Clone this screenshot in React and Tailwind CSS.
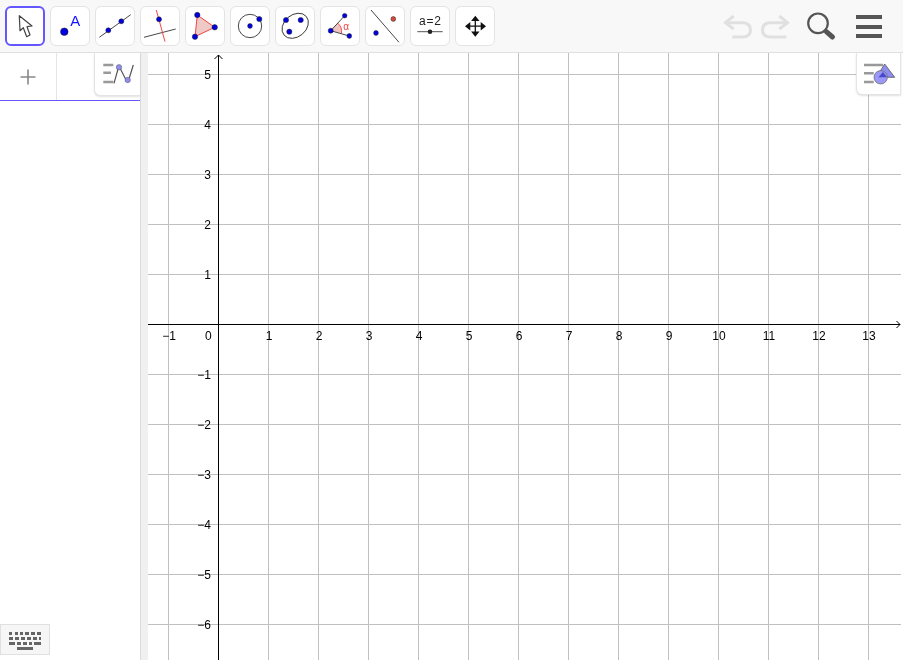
const F = "'Liberation Sans', Arial, sans-serif";

function ToolBtn({ active, children }) {
  return (
    <div className={`w-10 h-10 shrink-0 rounded-[6px] bg-white ${active ? "border-2 border-[#6557ff]" : "border border-[#e4e4e4]"} flex items-center justify-center`}>
      <svg width="40" height="40" viewBox="0 0 40 40" className={`shrink-0 will-change-transform ${active ? "-m-[2px]" : "-m-px"}`}>{children}</svg>
    </div>
  );
}

const B = "#0000e0";
const Dot = ({ x, y, r = 2.7, c = B }) => <circle cx={x} cy={y} r={r} fill={c} stroke="#222" strokeWidth="0.5" />;

function Toolbar() {
  return (
    <div className="h-[53px] shrink-0 bg-[#f8f8f8] border-b border-[#e0e0e0] flex items-start pl-[5px] pt-[6px] relative">
      <div className="flex gap-[5px]">
        <ToolBtn active>
          <path d="M14.3 9.7 L15 24.7 L18.3 21.7 L21.7 30.7 L25 29 L22 20.7 L27 20 Z" fill="#fff" stroke="#444" strokeWidth="1.2" strokeLinejoin="round" />
        </ToolBtn>
        <ToolBtn>
          <circle cx="14.3" cy="25.7" r="3.8" fill={B} stroke="#222" strokeWidth="0.5" />
          <text x="20.3" y="19.5" fontSize="15" fill="#1414ff" fontFamily={F}>A</text>
        </ToolBtn>
        <ToolBtn>
          <line x1="4.3" y1="31.3" x2="35.7" y2="8.7" stroke="#333" strokeWidth="0.9" />
          <Dot x={13.3} y={24.3} r={2.5} />
          <Dot x={26.3} y={15.3} r={2.5} />
        </ToolBtn>
        <ToolBtn>
          <line x1="4" y1="31.3" x2="35.7" y2="23" stroke="#333" strokeWidth="0.9" />
          <line x1="16.3" y1="4" x2="25" y2="35.7" stroke="#e33" strokeWidth="0.9" />
          <Dot x={19} y={13.3} r={2.5} />
        </ToolBtn>
        <ToolBtn>
          <path d="M12.3 9 L29.7 21.3 L10 30.7 Z" fill="#efc9c5" stroke="#e44" strokeWidth="1" />
          <Dot x={12.3} y={9} />
          <Dot x={29.7} y={21.3} />
          <Dot x={10} y={30.7} />
        </ToolBtn>
        <ToolBtn>
          <circle cx="20" cy="20" r="11.7" fill="none" stroke="#333" strokeWidth="0.9" />
          <Dot x={20} y={20} r={2.4} />
          <Dot x={29.3} y={13} r={2.6} />
        </ToolBtn>
        <ToolBtn>
          <ellipse cx="20.2" cy="19.8" rx="14.5" ry="11" fill="none" stroke="#333" strokeWidth="0.9" transform="rotate(-40 20.2 19.8)" />
          <Dot x={11} y={14} r={2.6} />
          <Dot x={25.7} y={14} r={2.6} />
          <Dot x={14.3} y={25.7} r={2.6} />
        </ToolBtn>
        <ToolBtn>
          <path d="M10.7 24.7 L17.5 17 A11 11 0 0 1 21.5 27.3 Z" fill="#f0c4c0" stroke="none" />
          <path d="M17.5 17 A11 11 0 0 1 21.5 27.3" fill="none" stroke="#e44" strokeWidth="0.9" />
          <line x1="10.7" y1="24.7" x2="24.7" y2="9.7" stroke="#333" strokeWidth="0.9" />
          <line x1="10.7" y1="24.7" x2="29.3" y2="30" stroke="#333" strokeWidth="0.9" />
          <Dot x={10.7} y={24.7} r={2.5} />
          <Dot x={24.7} y={9.7} r={2.3} />
          <Dot x={29.3} y={30} r={2.4} />
          <text x="23.2" y="23.5" fontSize="10" fill="#e44" fontFamily={F}>α</text>
        </ToolBtn>
        <ToolBtn>
          <line x1="6" y1="4" x2="34" y2="36.3" stroke="#333" strokeWidth="0.9" />
          <Dot x={28.3} y={13} r={2.4} c="#d84a3a" />
          <Dot x={11} y={27} r={2.4} />
        </ToolBtn>
        <ToolBtn>
          <text x="9" y="19" fontSize="12" fill="#222" fontFamily={F} textLength="22" lengthAdjust="spacing">a=2</text>
          <line x1="7.3" y1="25.7" x2="32.7" y2="25.7" stroke="#555" strokeWidth="1" />
          <circle cx="20" cy="25.7" r="2.3" fill="#222" />
        </ToolBtn>
        <ToolBtn>
          <path d="M20.3 13 V28 M13 20.2 H28" stroke="#111" strokeWidth="1.3" />
          <path d="M20.3 9.7 L24.5 15 H16.1 Z M20.3 30.7 L24.5 25.4 H16.1 Z M10 20.2 L15.3 16 V24.4 Z M31 20.2 L25.7 16 V24.4 Z" fill="#111" />
        </ToolBtn>
      </div>
      <div className="absolute left-[722px] top-[14px] flex items-center gap-[6px]">
        <svg width="32" height="26" viewBox="0 0 32 26" fill="none" stroke="#e0e0e0" strokeWidth="3">
          <path d="M4 8.7 H20 Q28.5 8.7 28.5 16 Q28.5 23 20 23 H10.3" />
          <path d="M11.7 2 L3.5 8.7 L11.7 15" />
        </svg>
        <svg width="32" height="26" viewBox="0 0 32 26" fill="none" stroke="#e0e0e0" strokeWidth="3">
          <path d="M28 8.7 H11 Q2.5 8.7 2.5 16 Q2.5 23 11 23 H26.3" />
          <path d="M19.3 2 L27.5 8.7 L19.3 15" />
        </svg>
      </div>
      <svg width="32" height="32" viewBox="0 0 32 32" className="absolute left-[806px] top-[11px]" fill="none">
        <circle cx="12" cy="12.3" r="9.8" stroke="#555" strokeWidth="2.2" />
        <line x1="20.3" y1="20.7" x2="26.5" y2="26" stroke="#555" strokeWidth="5" strokeLinecap="round" />
      </svg>
      <div className="absolute left-[856px] top-[15px] w-[26px] flex flex-col gap-[5.5px]">
        <div className="h-1 bg-[#555]" />
        <div className="h-1 bg-[#555]" />
        <div className="h-1 bg-[#555]" />
      </div>
    </div>
  );
}

function AlgebraPanel() {
  return (
    <div className="w-[141px] shrink-0 border-r border-[#dcdcdc] relative bg-white">
      <div className="h-[48px] border-b border-[#6557ff] flex">
        <div className="w-[57px] border-r border-[#e4e4e4] flex items-center justify-center">
          <svg width="16" height="16" viewBox="0 0 16 16"><path d="M8 .5 V15.5 M.5 8 H15.5" stroke="#888" strokeWidth="1.6" /></svg>
        </div>
      </div>
      <div className="absolute right-0 top-0 w-[46px] h-[43px] bg-white border-l border-b border-[#e4e4e4] rounded-bl-[6px] shadow-[0_1px_2px_rgba(0,0,0,0.12)]">
        <svg width="45" height="42" viewBox="0 0 45 42" fill="none">
          <path d="M8.3 12 H18.3 M8.3 19.7 H16 M8.3 29 H18.3" stroke="#999" strokeWidth="2.4" />
          <path d="M19 30.3 L23 16 Q24 13.5 25.5 16 L31 27 Q32.7 29 34 26 L38.3 12" stroke="#555" strokeWidth="1.2" />
          <circle cx="24" cy="14.3" r="2.7" fill="#8f8df0" stroke="#555" strokeWidth="0.5" />
          <circle cx="32.7" cy="27" r="2.7" fill="#8f8df0" stroke="#555" strokeWidth="0.5" />
        </svg>
      </div>
      <div className="absolute left-0 bottom-[5px] w-[50px] h-[31px] bg-[#f6f6f6] border border-[#e0e0e0] flex justify-center pt-[7px]">
        <svg width="33" height="18" viewBox="0 0 33 18" fill="#666">
          <path d="M0 0h3v3H0zM6 0h3v3H6zM11 0h3v3h-3zM16 0h4v3h-4zM22 0h4v3h-4zM28 0h4v3h-4z" />
          <path d="M0 5h4v3H0zM6 5h4v3H6zM12 5h4v3h-4zM18 5h4v3h-4zM24 5h4v3h-4zM30 5h2v3h-2z" />
          <path d="M0 10h6v3H0zM8 10h4v3H8zM14 10h4v3h-4zM20 10h3v3h-3zM25 10h7v3h-7z" />
          <path d="M8 15h16v3H8z" />
        </svg>
      </div>
    </div>
  );
}

const OX = 70, OY = 271; // origin in the svg: x=218, y=324 on the page
const xs = Array.from({ length: 15 }, (_, i) => i - 1);
const ys = [5, 4, 3, 2, 1, -1, -2, -3, -4, -5, -6];
const num = (n) => (n < 0 ? `−${-n}` : `${n}`);

function Graph() {
  return (
    <div className="flex-1 min-w-0 relative bg-white overflow-hidden">
      <svg width="755" height="607" viewBox="0 0 755 607" className="block will-change-transform" style={{ fontFamily: F }}>
        {xs.map((n) => n !== 0 && (
          <line key={n} x1={OX + n * 50 + 0.5} x2={OX + n * 50 + 0.5} y1="0" y2="607" stroke="#c0c0c0" />
        ))}
        {ys.map((n) => (
          <line key={n} x1="0" x2="753" y1={OY - n * 50 + 0.5} y2={OY - n * 50 + 0.5} stroke="#c0c0c0" />
        ))}
        <line x1="0" x2="752" y1={OY + 0.5} y2={OY + 0.5} stroke="#000" />
        <line x1={OX + 0.5} x2={OX + 0.5} y1="2" y2="607" stroke="#000" />
        <path d={`M${OX - 3.5} 6 L${OX + 0.5} 2 L${OX + 4.5} 6`} fill="none" stroke="#000" />
        <path d={`M748.5 ${OY - 3} L752 ${OY + 0.5} L748.5 ${OY + 4}`} fill="none" stroke="#000" />
        {xs.map((n) => (
          <text key={n} x={n === 0 ? OX - 9.7 : OX + n * 50 + 1} y={OY + 16} fontSize="12" fill="#000" textAnchor="middle">{num(n)}</text>
        ))}
        {ys.map((n) => (
          <text key={n} x={OX - 7} y={OY - n * 50 + 4.5} fontSize="12" fill="#000" textAnchor="end">{num(n)}</text>
        ))}
      </svg>
      <div className="absolute right-[2px] top-0 w-[45px] h-[42px] bg-white border-l border-r border-b border-[#e4e4e4] rounded-bl-[6px] shadow-[0_1px_2px_rgba(0,0,0,0.12)]">
        <svg width="43" height="41" viewBox="1 0 43 41" fill="none" className="overflow-visible">
          <path d="M8 12 H27 M8 20.3 H17.7 M8 29 H17.7" stroke="#999" strokeWidth="2.4" />
          <path d="M28.7 11 L38.7 24.3 H20.3 Z" fill="#8f8df0" stroke="#555" strokeWidth="0.8" />
          <circle cx="24.7" cy="24.3" r="6.7" fill="#9a98f8" stroke="#666" strokeWidth="0.7" />
          <path d="M27 19 L31 24.3 H22.5 Z" fill="#4848c8" />
        </svg>
      </div>
    </div>
  );
}

export default function App() {
  return (
    <div className="w-[903px] h-[660px] flex flex-col overflow-hidden bg-white" style={{ fontFamily: F }}>
      <Toolbar />
      <div className="flex-1 min-h-0 flex">
        <AlgebraPanel />
        <div className="w-[7px] shrink-0 bg-[#f0f0f0]" />
        <Graph />
      </div>
    </div>
  );
}
